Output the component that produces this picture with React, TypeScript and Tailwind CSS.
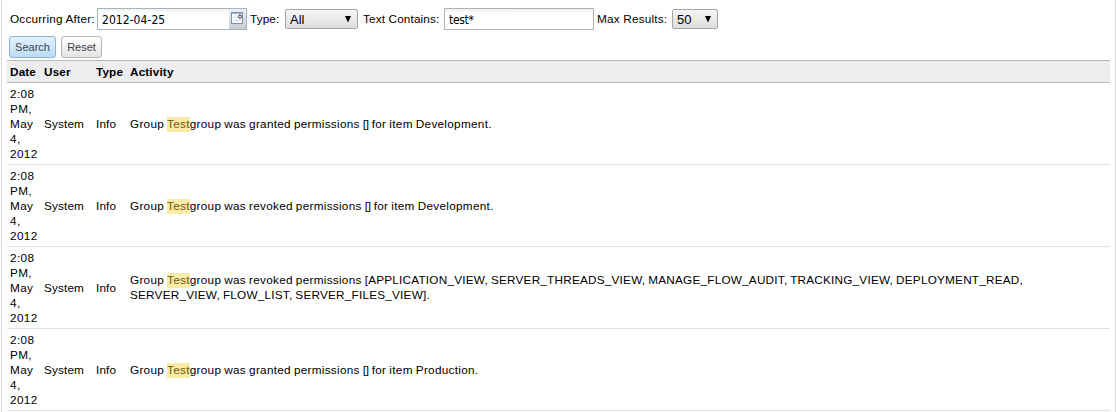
import React from 'react';

type Entry = { verb: string; permissions: string; item?: string };

const entries: Entry[] = [
  { verb: 'granted', permissions: '[]', item: 'Development' },
  { verb: 'revoked', permissions: '[]', item: 'Development' },
  {
    verb: 'revoked',
    permissions:
      '[APPLICATION_VIEW, SERVER_THREADS_VIEW, MANAGE_FLOW_AUDIT, TRACKING_VIEW, DEPLOYMENT_READ, SERVER_VIEW, FLOW_LIST, SERVER_FILES_VIEW]',
  },
  { verb: 'granted', permissions: '[]', item: 'Production' },
];

const columns = 'grid grid-cols-[34px_52px_34px_1fr] pl-[3px]';

function Select({ label, className }: { label: string; className: string }) {
  return (
    <div
      className={`flex h-5 items-center justify-between rounded-[2px] border border-[#a6a6a6] bg-linear-to-b from-[#f5f5f5] to-[#dedede] pl-1 pr-[5px] text-[13px] leading-[18px] tracking-normal ${className}`}
    >
      <span className="pt-px">{label}</span>
      <svg width="8" height="7" viewBox="0 0 8 7">
        <path d="M1 0h6L4 6.6z" fill="#000" />
      </svg>
    </div>
  );
}

function CalendarIcon() {
  return (
    <svg width="13" height="13" viewBox="0 0 13 13">
      <rect x=".5" y=".5" width="11" height="11" fill="#f4f6fb" stroke="#8590a8" />
      <path d="M1 1.5h10" stroke="#9fb0d0" />
      <path d="M3 5.5h4M3 8.5h6" stroke="#dfe3ea" />
      <circle cx="9" cy="4.5" r="1.5" fill="#fff" stroke="#2e2626" />
    </svg>
  );
}

export default function App() {
  return (
    <div className="h-[412px] w-[1116px] overflow-hidden bg-white pl-px font-['Liberation_Sans',Arial,sans-serif] text-[11.75px] leading-[15px] tracking-[0.14px] text-black">
      <div className="h-full border-x border-[#d9d9d9] pl-[5px] pr-[5px] pt-2">
        <div className="flex h-[22px] items-center pl-[3px]">
          <span className="w-[87px] whitespace-nowrap pb-px tracking-[0.2px]">Occurring After:</span>
          <div className="flex h-[22px] w-[150px] border border-[#a9b5bd] bg-linear-to-b from-[#eef0f1] to-white to-20% font-['DejaVu_Sans_Condensed','DejaVu_Sans',sans-serif] text-[12px] tracking-[0.05px]">
            <span className="w-[131px] pl-1 leading-[22px]">2012-04-25</span>
            <span className="flex w-[17px] items-start justify-center bg-linear-to-b from-[#eaf1fa] to-[#c9ced5] pt-[3px]">
              <CalendarIcon />
            </span>
          </div>
          <span className="ml-[3px] w-[35px] whitespace-nowrap pb-px">Type:</span>
          <Select label="All" className="w-[73px]" />
          <span className="ml-[5px] w-[81px] whitespace-nowrap pb-px">Text Contains:</span>
          <div className="h-[22px] w-[150px] border border-[#b0b4b7] bg-linear-to-b from-[#eceeef] to-white to-20% pl-1 font-['DejaVu_Sans_Condensed','DejaVu_Sans',sans-serif] text-[12px] leading-[22px] tracking-[-0.3px]">
            test*
          </div>
          <span className="ml-[3px] w-[75px] whitespace-nowrap pb-px tracking-[0.2px]">Max Results:</span>
          <Select label="50" className="w-[46px]" />
        </div>

        <div className="mt-[6px] flex gap-[5px] pl-[2px] text-[11px] tracking-normal text-[#444]">
          <button className="h-[22px] w-[47px] rounded-[3px] border border-[#8eb3cc] bg-linear-to-b from-[#e3f1fd] to-[#bbdcf5]">
            Search
          </button>
          <button className="h-[22px] w-[41px] rounded-[3px] border border-[#b4b4b4] bg-linear-to-b from-white to-[#e3e3e3]">
            Reset
          </button>
        </div>

        <div className="mt-[2px]">
          <div className={`${columns} h-[23px] items-center border-y border-[#b9b9b9] bg-[#ededed] font-bold`}>
            <span>Date</span>
            <span>User</span>
            <span>Type</span>
            <span>Activity</span>
          </div>
          {entries.map((entry, i) => (
            <div key={i} className={`${columns} h-[82px] items-center border-b border-[#e2e2e2]`}>
              <span className="tracking-[0.36px]">
                2:08
                <br />
                PM,
                <br />
                May
                <br />
                4,
                <br />
                2012
              </span>
              <span>System</span>
              <span>Info</span>
              <span
                className={`max-w-[920px] tracking-[0.28px] [word-spacing:-0.5px] ${entry.item ? '' : '-mt-px'}`}
              >
                Group{' '}
                <mark className="-mb-px mt-px inline-block h-[15px] bg-[#faeba6] align-top leading-[13px] text-[#6e5a10]">
                  Test
                </mark>
                group was {entry.verb} permissions{' '}
                {entry.item ? (
                  <>
                    <span className="tracking-[-0.3px]">{entry.permissions}</span>
                    <span className="tracking-[0.29px]"> for item {entry.item}.</span>
                  </>
                ) : (
                  <span className="tracking-[0.22px]">{entry.permissions}.</span>
                )}
              </span>
            </div>
          ))}
        </div>
      </div>
    </div>
  );
}
